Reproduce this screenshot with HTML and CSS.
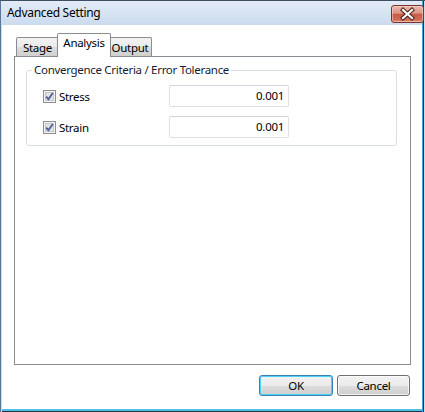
FILE: index.html
```html
<!DOCTYPE html>
<html>
<head>
<meta charset="utf-8">
<title>Advanced Setting</title>
<link rel="stylesheet" href="styles.css">
</head>
<body>
<div class="window">
  <div class="titlebar">
    <span class="title">Advanced Setting</span>
    <button class="close" aria-label="Close">
      <svg width="33" height="18" viewBox="0 0 33 18">
        <path d="M12 5 L21 13 M21 5 L12 13" stroke="#4a1f1a" stroke-width="4.2" stroke-linecap="square" fill="none"/>
        <path d="M12 5 L21 13 M21 5 L12 13" stroke="#ffffff" stroke-width="2.2" stroke-linecap="square" fill="none"/>
      </svg>
    </button>
  </div>
  <div class="client">
    <div class="tabs">
      <div class="tab tab-stage">Stage</div>
      <div class="tab tab-analysis selected">Analysis</div>
      <div class="tab tab-output">Output</div>
    </div>
    <div class="panel">
      <fieldset class="group">
        <legend>Convergence Criteria / Error Tolerance</legend>
        <div class="row">
          <label class="check">
            <svg class="cb" width="13" height="13" viewBox="0 0 13 13">
              <rect x="0.5" y="0.5" width="12" height="12" fill="#f4f4f4" stroke="#8e8f8f"/>
              <rect x="2.5" y="2.5" width="8" height="8" fill="#e2e2e2" stroke="#c6c6c6"/>
              <path d="M3.2 6.6 L5.4 9.2 L9.8 3" stroke="#4b5f9a" stroke-width="1.8" fill="none"/>
            </svg>
            <span>Stress</span>
          </label>
          <div class="field">0.001</div>
        </div>
        <div class="row">
          <label class="check">
            <svg class="cb" width="13" height="13" viewBox="0 0 13 13">
              <rect x="0.5" y="0.5" width="12" height="12" fill="#f4f4f4" stroke="#8e8f8f"/>
              <rect x="2.5" y="2.5" width="8" height="8" fill="#e2e2e2" stroke="#c6c6c6"/>
              <path d="M3.2 6.6 L5.4 9.2 L9.8 3" stroke="#4b5f9a" stroke-width="1.8" fill="none"/>
            </svg>
            <span>Strain</span>
          </label>
          <div class="field">0.001</div>
        </div>
      </fieldset>
    </div>
    <div class="buttons">
      <button class="btn btn-ok">OK</button>
      <button class="btn btn-cancel">Cancel</button>
    </div>
  </div>
</div>
</body>
</html>
```
FILE: styles.css
```css
html, body {
  margin: 0;
  padding: 0;
  background: #c8dcf0;
}
body {
  width: 425px;
  height: 412px;
  overflow: hidden;
  font-family: "Noto Sans", "Liberation Sans", sans-serif;
  font-size: 11.5px;
  letter-spacing: -0.3px;
  color: #000;
}
.window {
  width: 425px;
  height: 412px;
  box-sizing: border-box;
  display: flex;
  flex-direction: column;
  border-top: 1px solid #3d4f63;
  border-left: 1px solid #5a7698;
  background: linear-gradient(to right, #c8dcf0 0, #c8dcf0 421px, #46a6dc 421px, #46a6dc 422px, #253445 422px, #253445 423px, #c8dcf0 423px);
}
.titlebar {
  height: 24px;
  display: flex;
  align-items: flex-start;
  justify-content: space-between;
  background: linear-gradient(#e3ecf7, #cbdbee);
  margin-right: 3px;
}
.title {
  padding-left: 6px;
  line-height: 16px;
  padding-top: 4px;
  font-size: 12px;
}
.close {
  width: 33px;
  height: 18px;
  margin-top: 4px;
  margin-right: -2px;
  padding: 0;
  border: 1px solid #7a3329;
  border-radius: 3px;
  background: linear-gradient(#e9b9ae 0%, #dc9483 45%, #c95a45 52%, #cf6d55 85%, #dc8f74 100%);
  box-shadow: inset 0 0 0 1px rgba(255, 225, 215, 0.5);
  display: flex;
  align-items: center;
  justify-content: center;
  overflow: hidden;
}
.close svg {
  display: block;
  margin: -1px;
}
.client {
  flex: 1;
  margin-left: 1px;
  margin-right: 3px;
  margin-bottom: 3px;
  background: #ffffff;
  box-shadow: 0 2px 0 #4fc0e5, 0 3px 0 #253445;
  display: flex;
  flex-direction: column;
}
.tabs {
  display: flex;
  align-items: flex-end;
  height: 23px;
  padding-top: 8px;
  padding-left: 14px;
}
.tab {
  box-sizing: border-box;
  height: 19px;
  border: 1px solid #898c95;
  border-bottom: none;
  border-radius: 2px 2px 0 0;
  background: linear-gradient(#f2f2f2 0%, #ebebeb 50%, #dddddd 50%, #cfcfcf 100%);
  text-align: center;
  line-height: 19px;
  color: #000;
}
.tab-stage { width: 43px; }
.tab-analysis { width: 54px; }
.tab-output { width: 44px; margin-left: -1px; }
.tab.selected {
  height: 24px;
  margin: 0 -2px -1px -2px;
  background: #ffffff;
  line-height: 18px;
  position: relative;
  z-index: 1;
}
.panel {
  box-sizing: border-box;
  width: 397px;
  height: 309px;
  margin-left: 12px;
  border: 1px solid #898c95;
  background: #ffffff;
  padding: 6px 0 0 11px;
}
.group {
  box-sizing: border-box;
  width: 371px;
  margin: 0;
  padding: 8px 0 7px 16px;
  border: 1px solid #d5dfe5;
  border-radius: 3px;
}
.group legend {
  margin-left: -11px;
  padding: 0 2px;
  line-height: 14px;
  color: #151d2e;
}
.row {
  display: grid;
  grid-template-columns: 126px 120px;
  align-items: center;
  height: 22px;
}
.row + .row {
  margin-top: 9px;
}
.check {
  display: flex;
  align-items: center;
  gap: 3px;
}
.cb {
  display: block;
}
.field {
  box-sizing: border-box;
  height: 22px;
  border: 1px solid #dde1e8;
  border-top-color: #cfd3da;
  border-radius: 2px;
  text-align: right;
  padding-right: 4px;
  line-height: 20px;
}
.buttons {
  display: flex;
  justify-content: flex-end;
  gap: 4px;
  margin-top: 10px;
  padding-right: 12px;
}
.btn {
  box-sizing: border-box;
  height: 21px;
  padding: 0;
  font-family: "Noto Sans", "Liberation Sans", sans-serif;
  font-size: 11.5px;
  letter-spacing: -0.3px;
  color: #000;
  border: 1px solid #707070;
  border-radius: 3px;
  background: linear-gradient(#f2f2f2 0%, #ebebeb 50%, #dddddd 50%, #cfcfcf 100%);
  box-shadow: inset 0 0 0 1px rgba(255, 255, 255, 0.7);
  line-height: 18px;
}
.btn-ok {
  width: 74px;
  border-color: #3c7fb1;
  box-shadow: inset 0 0 0 1px #48d3fb;
}
.btn-cancel {
  width: 73px;
}
```
